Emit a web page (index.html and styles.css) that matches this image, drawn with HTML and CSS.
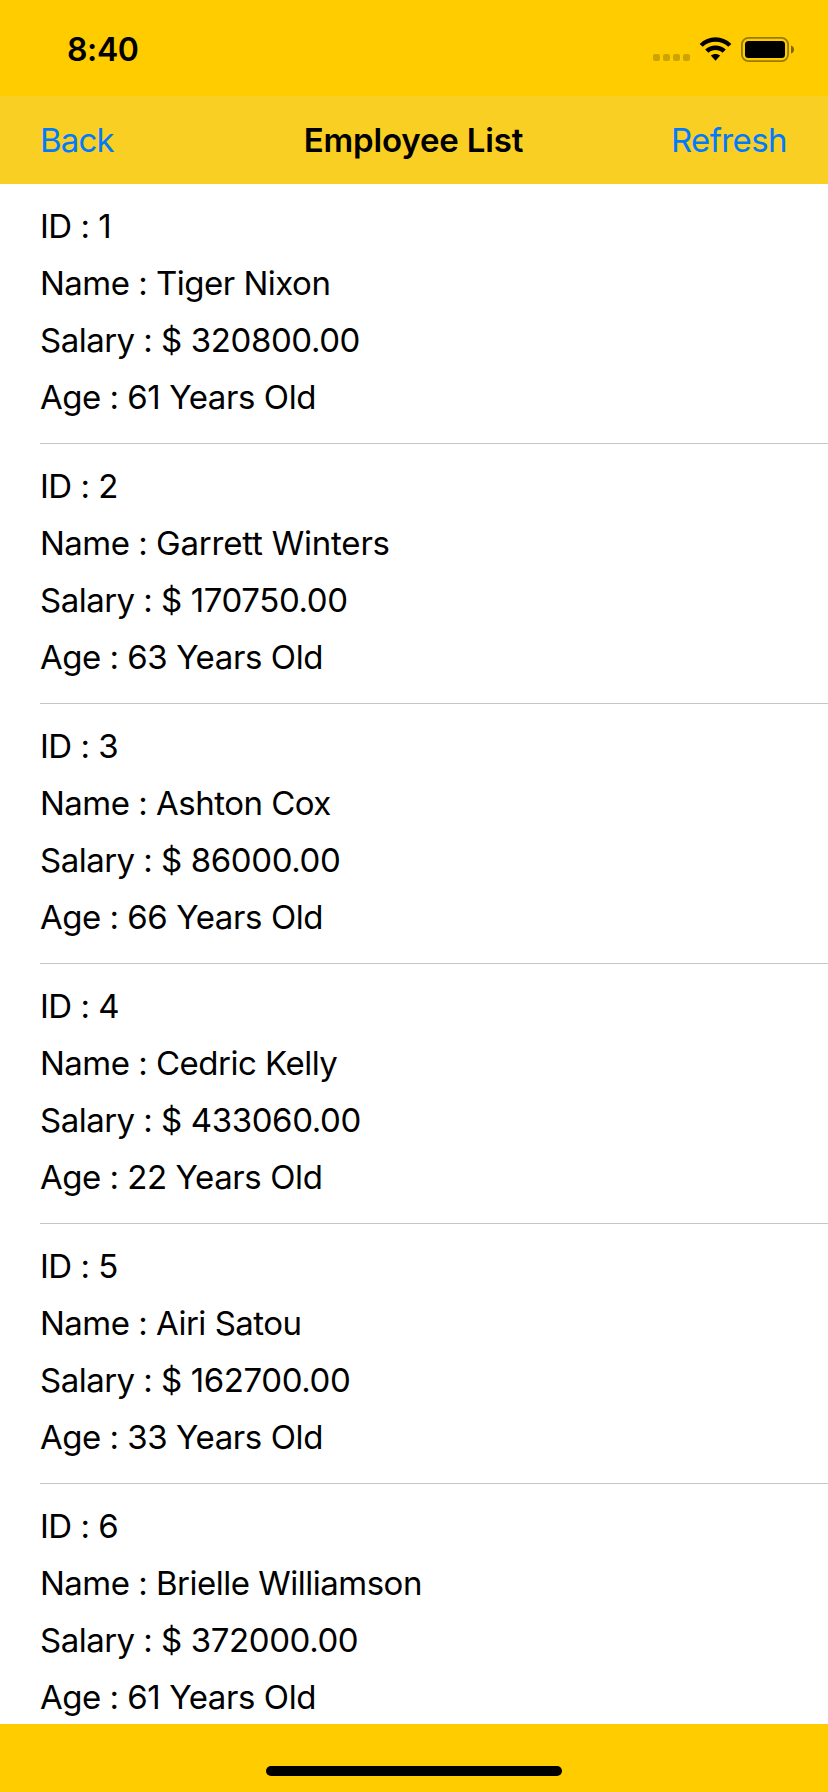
FILE: index.html
```html
<!DOCTYPE html>
<html lang="en">
<head>
<meta charset="utf-8">
<title>Employee List</title>
<link rel="stylesheet" href="styles.css">
</head>
<body>
<div class="screen">
<header class="status">
<span class="time">8:40</span>
<svg class="status-icons" viewBox="0 0 142 28" width="142" height="28">
<g fill="#000" fill-opacity=".2"><rect x="0" y="19" width="7" height="7" rx="2"/><rect x="10" y="19" width="7" height="7" rx="2"/><rect x="20" y="19" width="7" height="7" rx="2"/><rect x="30" y="19" width="7" height="7" rx="2"/></g>
<path d="M46.600 8.900C55.400 .1 69.600 .1 78.400 8.900L75.300 11.800C68.200 5 56.800 5 49.700 11.800Z"/>
<path d="M52.200 14.600C57.900 9.200 67.100 9.200 72.800 14.600L69.600 17.700C65.700 14.100 59.300 14.100 55.400 17.700Z"/>
<path d="M57.800 20.600C60.400 18.500 64.600 18.500 67.200 20.600L62.500 25.700Z"/>
<rect x="88.900" y="2.900" width="46.200" height="23.200" rx="6.500" fill="none" stroke="#000" stroke-opacity=".4" stroke-width="1.8"/>
<rect x="92" y="6" width="40" height="17" rx="3.500"/>
<path d="M138 10.500v8q3-1 3-4t-3-4z" fill-opacity=".5"/>
</svg>
</header>
<nav class="nav"><a class="link">Back</a><h1 class="title">Employee List</h1><a class="link right">Refresh</a></nav>
<main class="list">
<section class="employee"><p><span class="label">ID : </span>1</p><p><span class="label">Name : </span><span class="name">Tiger Nixon</span></p><p><span class="label">Salary : </span>$ 320800.00</p><p><span class="label">Age : </span>61 Years Old</p></section>
<section class="employee"><p><span class="label">ID : </span>2</p><p><span class="label">Name : </span><span class="name wide">Garrett Winters</span></p><p><span class="label">Salary : </span>$ 170750.00</p><p><span class="label">Age : </span>63 Years Old</p></section>
<section class="employee"><p><span class="label">ID : </span>3</p><p><span class="label">Name : </span><span class="name">Ashton Cox</span></p><p><span class="label">Salary : </span>$ 86000.00</p><p><span class="label">Age : </span>66 Years Old</p></section>
<section class="employee"><p><span class="label">ID : </span>4</p><p><span class="label">Name : </span><span class="name">Cedric Kelly</span></p><p><span class="label">Salary : </span>$ 433060.00</p><p><span class="label">Age : </span>22 Years Old</p></section>
<section class="employee"><p><span class="label">ID : </span>5</p><p><span class="label">Name : </span><span class="name">Airi Satou</span></p><p><span class="label">Salary : </span>$ 162700.00</p><p><span class="label">Age : </span>33 Years Old</p></section>
<section class="employee"><p><span class="label">ID : </span>6</p><p><span class="label">Name : </span><span class="name">Brielle Williamson</span></p><p><span class="label">Salary : </span>$ 372000.00</p><p><span class="label">Age : </span>61 Years Old</p></section>
</main>
<footer class="footer"><div class="home"></div></footer>
</div>
</body>
</html>
```
FILE: styles.css
```css
* { box-sizing: border-box; }
body { margin: 0; background: #ffcc00; font-family: Inter, sans-serif; color: #000; }
.screen { display: flex; flex-direction: column; width: 828px; height: 1792px; overflow: hidden; }
.status { display: flex; justify-content: space-between; flex: 0 0 96px; padding: 35px 33px 0 67px; }
.time { font-size: 32px; line-height: 30px; font-weight: 600; letter-spacing: -0.4px; }
.status-icons { flex: none; }
.nav { display: grid; grid-template-columns: 1fr auto 1fr; align-items: center; flex: 0 0 88px; padding: 0 41px 0 40px; background: #facf23; font-size: 33px; }
.link { color: #007aff; letter-spacing: -0.8px; }
.right { text-align: right; letter-spacing: -0.6px; }
.title { margin: 0; font-size: 33px; font-weight: 600; letter-spacing: -0.15px; }
.list { flex: 0 0 1540px; overflow: hidden; background: #fff; font-feature-settings: "calt" 0; }
.employee { height: 260px; margin-left: 40px; padding-top: 14px; border-bottom: 1px solid #c6c6c8; }
.employee p { margin: 0; height: 57px; line-height: 57px; font-size: 33px; letter-spacing: -0.4px; white-space: pre; }
.employee .label { letter-spacing: -0.52px; }
.employee .name { letter-spacing: -0.5px; }
.employee .wide { letter-spacing: -0.2px; }
.footer { display: flex; justify-content: center; flex: 1; padding-top: 42px; }
.home { width: 296px; height: 10px; border-radius: 5px; background: #000; }
```
